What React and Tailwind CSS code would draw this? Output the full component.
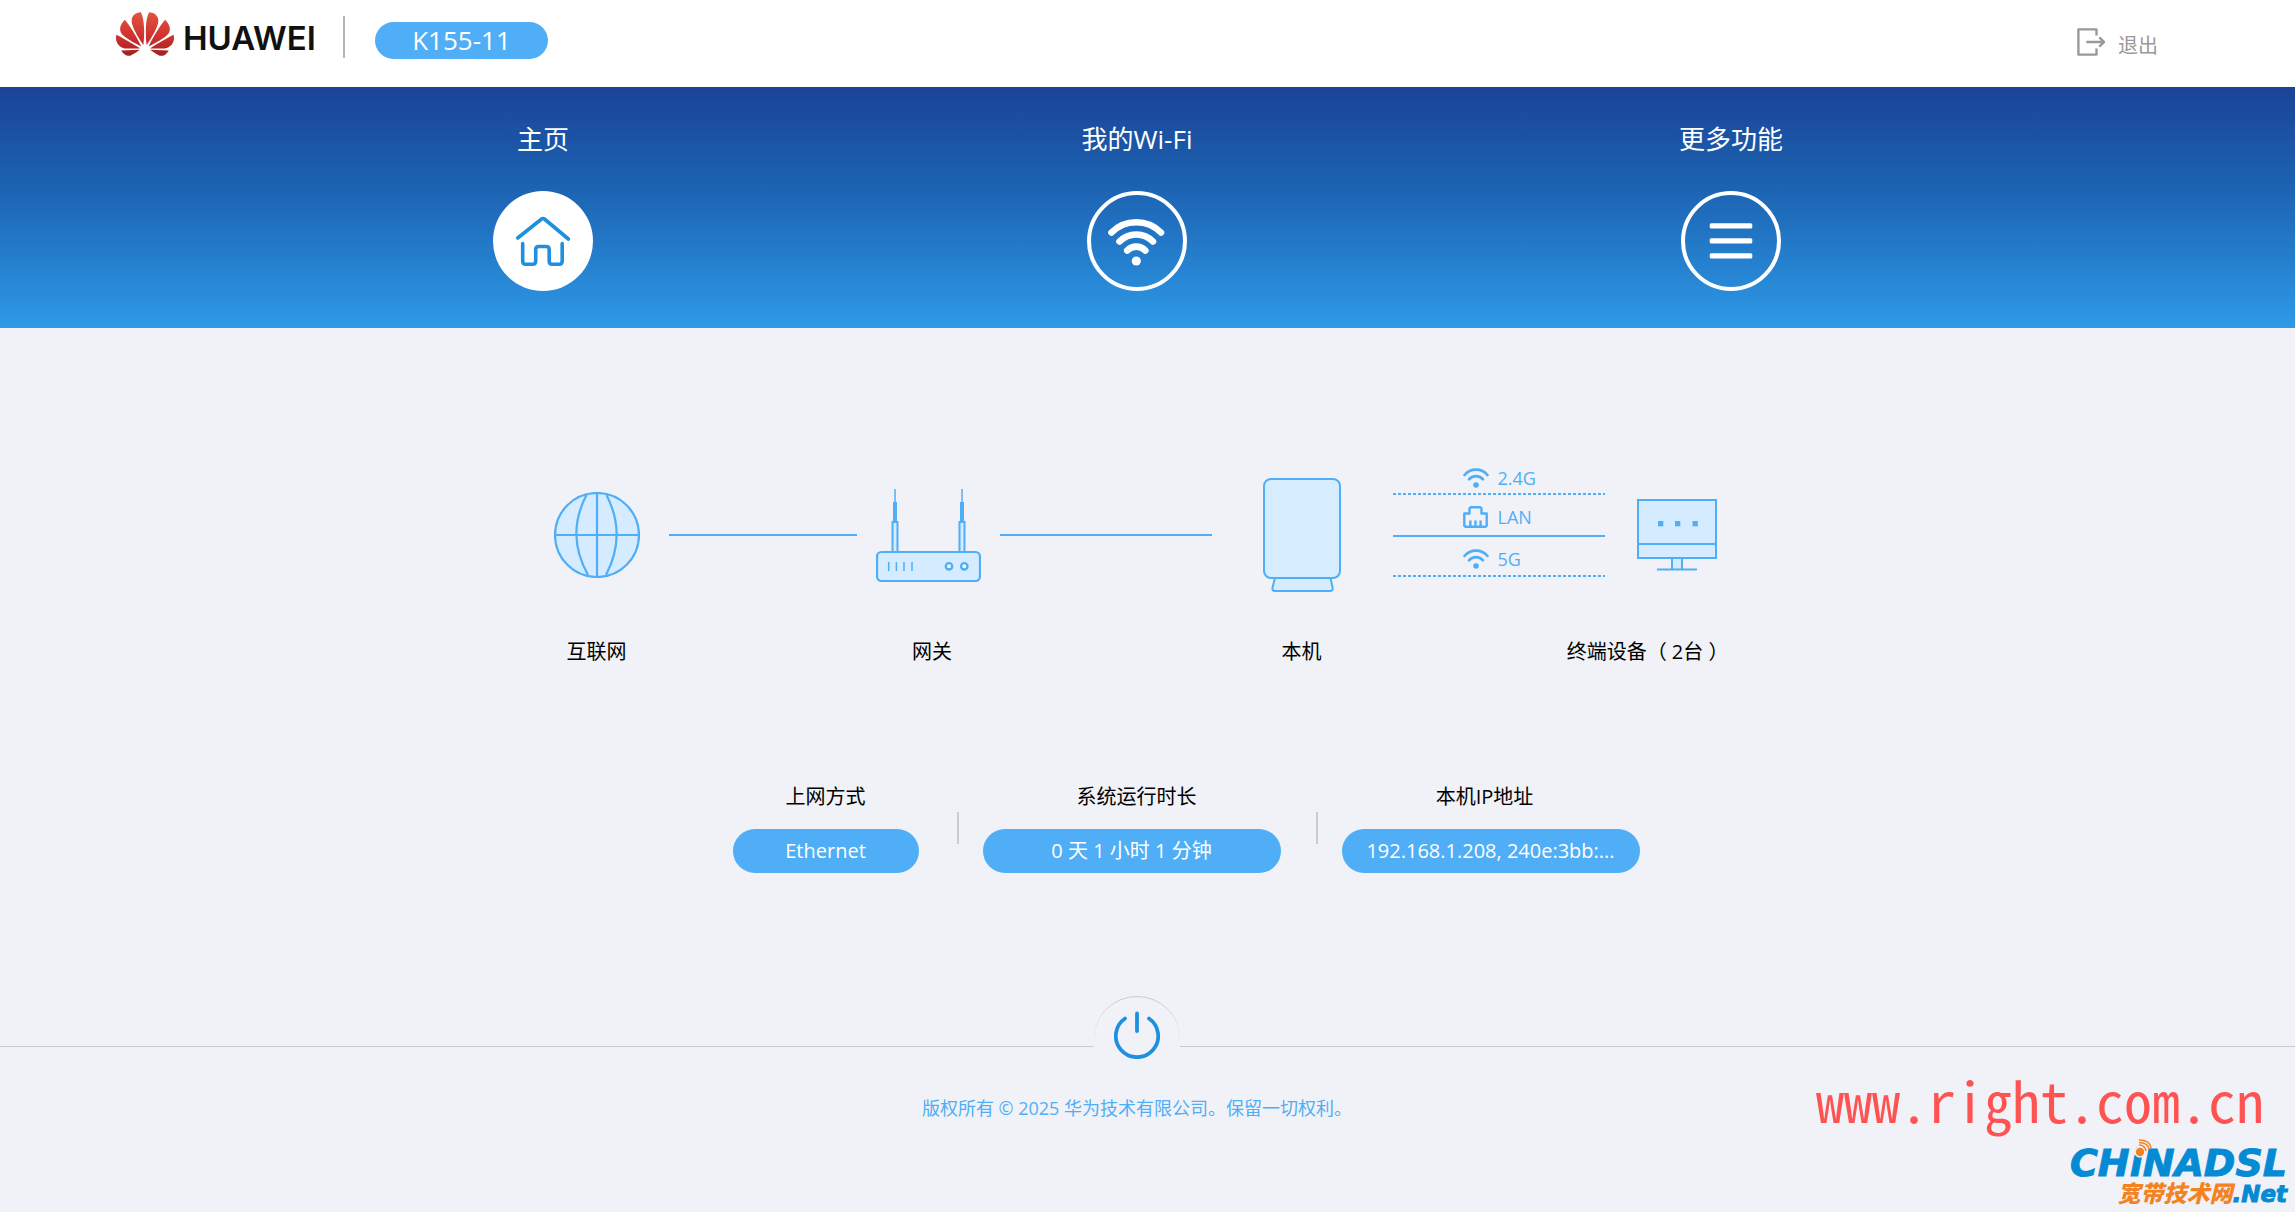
import React from "react";

const LINE = "#50aef6";
const PALE = "#d5ebff";

function HuaweiMark() {
  return (
    <svg viewBox="0 2.9 24 18.2" className="h-11 w-[58px]" aria-hidden="true">
      <defs>
        <linearGradient id="petal" x1="0" y1="0" x2="0" y2="1">
          <stop offset="0" stopColor="#e2553f" />
          <stop offset="0.55" stopColor="#cf3230" />
          <stop offset="1" stopColor="#a3201f" />
        </linearGradient>
      </defs>
      <path
        fill="url(#petal)"
        d="M3.67 6.14S1.82 7.91 1.72 9.78v.35c.08 1.51 1.22 2.4 1.22 2.4 1.83 1.79 6.26 4.04 7.3 4.55 0 0 .06.03.1-.01l.02-.04v-.04C7.52 10.8 3.67 6.14 3.67 6.14zM9.65 18.6c-.02-.08-.1-.08-.1-.08l-7.38.26c.8 1.43 2.15 2.53 3.56 2.2.96-.25 3.16-1.78 3.88-2.3.06-.05.04-.09.04-.09zm.08-.78C6.49 15.63.21 12.28.21 12.28c-.15.46-.2.9-.21 1.3v.07c0 1.07.4 1.82.4 1.82.8 1.69 2.34 2.2 2.34 2.2.7.3 1.4.31 1.4.31.12.02 4.4 0 5.54 0 .05 0 .08-.05.08-.05v-.06c0-.03-.03-.05-.03-.05zM9.06 3.19a3.42 3.42 0 00-2.57 3.15v.41c.03.6.16 1.05.16 1.05.66 2.9 3.86 7.65 4.55 8.65.05.05.1.03.1.03a.1.1 0 00.06-.1c1.06-10.6-1.11-13.42-1.11-13.42-.32.02-1.19.23-1.19.23zm8.299 2.27s-.49-1.8-2.44-2.28c0 0-.57-.14-1.17-.22 0 0-2.18 2.81-1.12 13.43.01.07.06.08.06.08.07.03.1-.03.1-.03.72-1.03 3.9-5.76 4.55-8.64 0 0 .36-1.4.02-2.34zm-2.92 13.07s-.07 0-.09.05c0 0-.01.07.03.1.7.51 2.85 2 3.88 2.3 0 0 .16.05.43.06h.14c.69-.02 1.9-.37 3-2.26l-7.4-.25zm7.83-8.41c.14-2.06-1.94-3.97-1.94-3.98 0 0-3.85 4.66-6.67 10.8 0 0-.03.08.02.13l.04.01h.06c1.06-.53 5.46-2.77 7.28-4.54 0 0 1.15-.93 1.21-2.42zm1.52 2.14s-6.28 3.37-9.52 5.55c0 0-.05.04-.03.11 0 0 .03.06.07.06 1.16 0 5.56 0 5.67-.02 0 0 .57-.02 1.27-.29 0 0 1.56-.5 2.37-2.27 0 0 .73-1.45.17-3.14z"
      />
    </svg>
  );
}

function LogoutIcon() {
  return (
    <svg viewBox="0 0 28 28" className="size-7" fill="none" stroke="#999" strokeWidth="2.4" aria-hidden="true">
      <path d="M19.5 7.5V1.4H1.4v25.2h18.1v-6.1" strokeLinejoin="round" />
      <path d="M9.3 14H26M22.3 9.3 27 14l-4.7 4.7" />
    </svg>
  );
}

function HomeIcon() {
  return (
    <svg viewBox="0 0 100 100" className="size-[100px]" aria-hidden="true">
      <circle cx="50" cy="50" r="50" fill="#fff" />
      <g fill="none" stroke="#1f8fe0" strokeWidth="3.6" strokeLinecap="round" strokeLinejoin="round">
        <path d="M24.7 47 48.6 28q1.4-1 2.8 0l24 20" />
        <path d="M29.7 52.5V70.3q0 3 3 3h7q3 0 3-3V58.5q0-3 3-3h7.5q3 0 3 3V70.3q0 3 3 3h7q3 0 3-3V52.5" />
      </g>
    </svg>
  );
}

function WifiIcon() {
  return (
    <svg viewBox="0 0 100 100" className="size-[100px]" fill="none" stroke="#fff" aria-hidden="true">
      <circle cx="50" cy="50" r="48" strokeWidth="4" />
      <g strokeWidth="6.6" strokeLinecap="round">
        <path d="M24.5 41.5A35 35 0 0 1 74 41.5" />
        <path d="M32.5 50.5A23.5 23.5 0 0 1 66 50.5" />
        <path d="M40.2 59.5A12.5 12.5 0 0 1 58.3 59.5" />
      </g>
      <circle cx="49.3" cy="70" r="4.6" fill="#fff" stroke="none" />
    </svg>
  );
}

function MenuIcon() {
  return (
    <svg viewBox="0 0 100 100" className="size-[100px]" aria-hidden="true">
      <circle cx="50" cy="50" r="48" fill="none" stroke="#fff" strokeWidth="4" />
      <g fill="#fff">
        <rect x="28.7" y="32.2" width="42.6" height="5.2" rx="1.5" />
        <rect x="28.7" y="47.2" width="42.6" height="5.2" rx="1.5" />
        <rect x="28.7" y="62.2" width="42.6" height="5.2" rx="1.5" />
      </g>
    </svg>
  );
}

function GlobeIcon() {
  return (
    <svg viewBox="0 0 86 86" className="size-[86px]" fill="none" stroke={LINE} strokeWidth="2.2" aria-hidden="true">
      <circle cx="43" cy="43" r="42" fill={PALE} />
      <path d="M43 1v84M1 43h84M32.5 3Q11.5 43 34 83M52.5 3Q73 43 52 83" />
    </svg>
  );
}

function RouterIcon() {
  return (
    <svg viewBox="0 0 105 93" className="h-[93px] w-[105px]" fill="none" stroke={LINE} aria-hidden="true">
      {[19, 86].map((x) => (
        <g key={x}>
          <path d={`M${x} 0v13`} strokeWidth="1.5" />
          <path d={`M${x} 13v19`} strokeWidth="4" />
          <path d={`M${x - 2.5} 63V33h5v30`} strokeWidth="2" fill={PALE} />
        </g>
      ))}
      <rect x="1" y="63" width="103" height="29" rx="4.5" fill={PALE} strokeWidth="2.2" />
      <path d="M12.7 73v9M20.4 73v9M28 73v9M36 73v9" strokeWidth="1.5" />
      <circle cx="73" cy="77.3" r="3.2" strokeWidth="2.4" fill="#fff" />
      <circle cx="88.3" cy="77.3" r="3.2" strokeWidth="2.4" fill="#fff" />
    </svg>
  );
}

function DeviceIcon() {
  return (
    <svg viewBox="0 0 78 114" className="h-[114px] w-[78px]" fill="#d6edff" stroke={LINE} strokeWidth="2" aria-hidden="true">
      <path d="M12 100 9.4 110q-.4 3 2.6 3H67q3 0 2.7-3L67.5 100z" strokeLinejoin="round" />
      <rect x="1" y="1" width="76" height="99" rx="7" />
    </svg>
  );
}

function ComputerIcon() {
  return (
    <svg viewBox="0 0 80 72" className="h-[72px] w-20" fill={PALE} stroke={LINE} strokeWidth="2" aria-hidden="true">
      <path d="M35 59v11M45 59v11" />
      <rect x="36" y="59" width="8" height="11" stroke="none" />
      <path d="M20 70.5h40" />
      <rect x="1" y="1" width="78" height="58" />
      <path d="M1 45h78" />
      <g fill={LINE} stroke="none">
        <rect x="21" y="22" width="5.3" height="5.3" />
        <rect x="38" y="22" width="5.3" height="5.3" />
        <rect x="55.5" y="22" width="5.3" height="5.3" />
      </g>
    </svg>
  );
}

function SmallWifi() {
  return (
    <svg viewBox="0 0 26 20" className="h-5 w-[26px]" fill="none" stroke={LINE} strokeWidth="2.6" strokeLinecap="round" aria-hidden="true">
      <path d="M1.5 7A15 15 0 0 1 24.5 7M6 11.3A9.3 9.3 0 0 1 20 11.3" />
      <circle cx="13" cy="17" r="2.8" fill={LINE} stroke="none" />
    </svg>
  );
}

function LanIcon() {
  return (
    <svg viewBox="0 0 26 22" className="h-[22px] w-[26px]" fill="none" stroke={LINE} strokeWidth="2.4" strokeLinejoin="round" aria-hidden="true">
      <path d="M1.3 19.7V7.5h5.2V2.5L7.5 1.3h10l1 1.2v5h5.2v12.2l-1 1H2.3zM7.4 14.5v6M12.500 14.5v6M17.6 14.5v6" />
    </svg>
  );
}

function PowerIcon() {
  return (
    <svg viewBox="0 0 46 48" className="h-12 w-[46px]" fill="none" stroke="#1f8fe0" strokeWidth="3.8" strokeLinecap="round" aria-hidden="true">
      <path d="M23 2.5v17.5M11 7.5a21.2 21.2 0 1 0 24 0" />
    </svg>
  );
}

const tabs = [
  { label: "主页", Icon: HomeIcon },
  { label: "我的Wi-Fi", Icon: WifiIcon },
  { label: "更多功能", Icon: MenuIcon },
];

function Node({ icon, label, align = "items-center", labelClass = "" }) {
  return (
    <div className={`flex flex-none flex-col ${align}`}>
      <div className="flex h-[138px] items-center">{icon}</div>
      <p className={`mt-8 text-xl leading-8 whitespace-nowrap ${labelClass}`}>{label}</p>
    </div>
  );
}

function Band({ icon, label, rowClass, lineClass }) {
  return (
    <div>
      <div className={`flex items-center gap-[9px] pl-[70px] ${rowClass}`}>
        {icon}
        <span className="text-lg leading-6">{label}</span>
      </div>
      <div className={`h-0.5 ${lineClass}`} />
    </div>
  );
}

const DASHED = "bg-[repeating-linear-gradient(90deg,#50aef6_0_3px,transparent_3px_5px)]";

function Info({ title, value, width, titleClass = "" }) {
  return (
    <div className={`flex-none ${width}`}>
      <dt className={`text-center text-xl leading-8 ${titleClass}`}>{title}</dt>
      <dd className="mt-4 h-11 truncate rounded-[22px] bg-[#50aef6] px-4 text-center text-xl leading-[44px] text-white">
        {value}
      </dd>
    </div>
  );
}

export default function App() {
  return (
    <div className="relative flex min-h-screen flex-col bg-[#f0f2f7] font-['Open_Sans','Noto_Sans_CJK_SC',sans-serif] text-black">
      <header className="h-[87px] bg-white pr-[21px]">
        <div className="flex items-start px-[116px] pt-3">
          <a href="#home" className="flex items-center gap-[9px]" aria-label="HUAWEI">
            <HuaweiMark />
            <span className="w-[130px] pt-2 font-[Inter,sans-serif] text-[33px] leading-9 font-semibold text-[#111]">
              HUAWEI
            </span>
          </a>
          <div className="mt-1 ml-[30px] h-[42px] w-0.5 bg-[#b5b5b5]" />
          <div className="mt-2.5 ml-[30px] h-[37px] w-[173px] rounded-full bg-[#50aef6] text-center text-[26px] leading-9 text-white">
            K155-11
          </div>
          <button type="button" className="mt-4 ml-auto flex items-start gap-[13px] text-xl text-[#999]">
            <LogoutIcon />
            <span className="mt-0.5 leading-8">退出</span>
          </button>
        </div>
      </header>

      <nav className="h-[241px] bg-linear-to-b from-[#1a4396] via-[#1d66b5] via-45% to-[#2e9ae8] pr-[21px]">
        <div className="mx-auto grid max-w-[1782px] grid-cols-3 pt-8">
          {tabs.map(({ label, Icon }) => (
            <a key={label} href="#tab" className="flex flex-col items-center gap-8 text-white">
              <span className="text-[26px] leading-10">{label}</span>
              <Icon />
            </a>
          ))}
        </div>
      </nav>

      <main className="pt-[138px] pr-[21px]">
        <section className="flex justify-center pr-1">
          <Node icon={<GlobeIcon />} label="互联网" />
          <div className="mt-[68px] mr-[19px] ml-[29px] h-0.5 w-[188px] bg-[#50aef6]" />
          <Node icon={<RouterIcon />} label="网关" labelClass="pl-2" />
          <div className="mt-[68px] mr-[51px] ml-[19px] h-0.5 w-[212px] bg-[#50aef6]" />
          <Node icon={<DeviceIcon />} label="本机" />
          <div className="mr-8 ml-[52px] w-[212px] text-[#50aef6]">
            <Band icon={<SmallWifi />} label="2.4G" rowClass="h-[27px] pb-1" lineClass={DASHED} />
            <Band icon={<LanIcon />} label="LAN" rowClass="h-10 pt-1" lineClass="bg-[#50aef6]" />
            <Band icon={<SmallWifi />} label="5G" rowClass="h-[38px] pt-1.5" lineClass={DASHED} />
          </div>
          <div className="w-20">
            <Node icon={<ComputerIcon />} label="终端设备（ 2台 ）" align="items-end" labelClass="-mr-3" />
          </div>
        </section>

        <dl className="mt-[113px] flex justify-center pl-[98px]">
          <Info title="上网方式" value="Ethernet" width="w-[186px]" />
          <div className="mt-[31px] mr-6 ml-[38px] h-8 w-0.5 bg-[#ccc]" />
          <Info title="系统运行时长" value="0 天 1 小时 1 分钟" width="w-[298px]" titleClass="pl-2.5" />
          <div className="mt-[31px] mr-6 ml-[35px] h-8 w-0.5 bg-[#ccc]" />
          <Info title="本机IP地址" value="192.168.1.208, 240e:3bb:..." width="w-[298px]" titleClass="pr-3" />
        </dl>
      </main>

      <footer className="mt-[123px]">
        <div className="flex h-[86px] items-start">
          <div className="mt-[50px] h-px flex-1 bg-[#ccc]" />
          <button
            type="button"
            aria-label="电源"
            className="flex size-[86px] justify-center rounded-full border-t border-[#ccc] pt-3.5"
          >
            <PowerIcon />
          </button>
          <div className="mt-[50px] h-px flex-1 bg-[#ccc] pl-[21px]" />
        </div>
        <p className="mt-2.5 pr-[21px] text-center text-lg leading-8 text-[#50aef6]">
          版权所有 © 2025 华为技术有限公司。保留一切权利。
        </p>
      </footer>

      <aside className="absolute right-2 bottom-1.5 flex flex-col items-end">
        <p className="mr-[23px] mb-2.5 font-['Noto_Sans_Mono_CJK_SC','Liberation_Mono',monospace] text-[56px] leading-[72px] font-thin text-[#ff5353]">
          www.right.com.cn
        </p>
        <div className="relative font-['DejaVu_Sans',sans-serif] text-[38px] leading-9 font-bold text-[#058ad4] italic [-webkit-text-stroke:1px_#058ad4]">
          CHiNADSL
          <svg viewBox="0 0 20 20" className="absolute -top-1.5 left-[64px] size-5" fill="none" stroke="#f58220" strokeWidth="1.6" aria-hidden="true">
            <circle cx="6" cy="13" r="5" fill="#f58220" stroke="#f0f2f7" />
            <path d="M5 6q6 0 7 6M5 3.5q9 0 10 7M5 1q11 0 12 8" />
          </svg>
        </div>
        <p className="text-[23px] leading-6 font-black text-[#f58220] italic">
          宽带技术网<span className="font-['DejaVu_Sans',sans-serif] font-bold text-[#058ad4] [-webkit-text-stroke:1px_#058ad4]">.Net</span>
        </p>
      </aside>
    </div>
  );
}
